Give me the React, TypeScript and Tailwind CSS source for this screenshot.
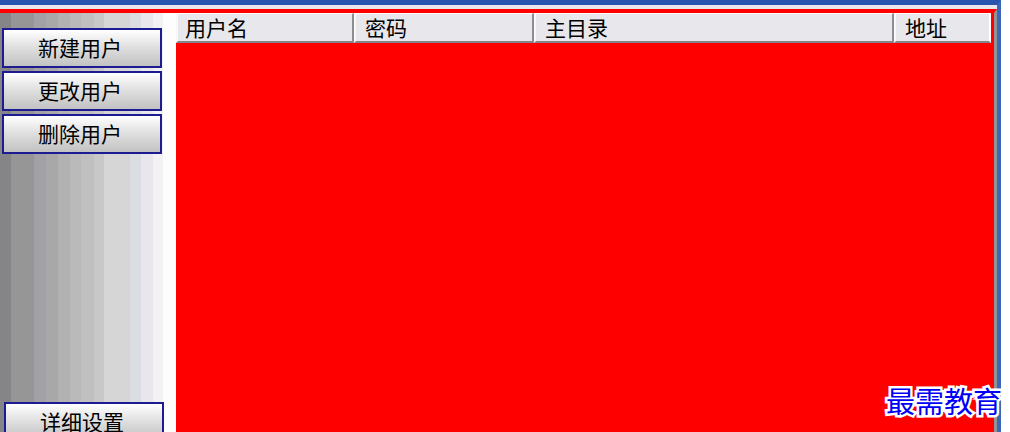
import React, { useState } from 'react';

interface Column {
  title: string;
  width: string;
}

const COLUMNS: Column[] = [
  { title: '用户名', width: 'w-[178px]' },
  { title: '密码', width: 'w-[180px]' },
  { title: '主目录', width: 'w-[360px]' },
  { title: '地址', width: 'w-auto' },
];

const USER_ACTIONS = ['新建用户', '更改用户', '删除用户'];

const SideButton: React.FC<{ label: string; onClick: () => void }> = ({ label, onClick }) => (
  <button
    type="button"
    onClick={onClick}
    className="h-10 w-full shrink-0 border-2 border-[#1c1c90] bg-linear-to-b from-white via-[#dededf] to-[#c2c2c2] pr-1 pb-0.5 text-[21px] leading-[34px] text-black"
  >
    {label}
  </button>
);

const Sidebar: React.FC<{ onAction: (label: string) => void }> = ({ onAction }) => (
  <nav className="flex w-44 shrink-0 flex-col bg-[linear-gradient(to_right,#858587_11px,#969696_11px_34px,#a1a1a6_34px_46px,#a8a8a9_46px_58px,#b2b2b2_58px_70px,#bababa_70px_81px,#c0c0c0_81px_94px,#c8c8c8_94px_104px,#d6d6d6_104px_130px,#dadee3_130px_141px,#e9e7ed_141px_153px,#f2f2f2_153px_163px,#fdfdfd_163px)] pt-[15px] pr-3 pl-0.5">
    <div className="flex flex-col gap-[3px] pr-0.5">
      {USER_ACTIONS.map(label => (
        <SideButton key={label} label={label} onClick={() => onAction(label)} />
      ))}
    </div>
    {/* Settings button runs past the bottom edge of the window */}
    <div className="mt-auto -mb-2.5 pl-0.5">
      <SideButton label="详细设置" onClick={() => onAction('详细设置')} />
    </div>
  </nav>
);

const UserTable: React.FC = () => (
  <div className="min-w-0 flex-1 bg-[#ff0000] pr-[3px]">
    <table className="w-full table-fixed border-separate border-spacing-0">
      <thead>
        <tr>
          {COLUMNS.map(({ title, width }) => (
            <th
              key={title}
              scope="col"
              className={`${width} h-[30px] border-t border-r-2 border-b-2 border-l-2 border-t-white border-r-[#8e8e90] border-b-[#858587] border-l-[#f8f8fa] bg-[#e8e7eb] p-0 pl-[7px] text-left text-[21px] leading-[27px] font-normal text-black not-first:pl-[9px] last:border-r-white`}
            >
              {title}
            </th>
          ))}
        </tr>
      </thead>
      <tbody />
    </table>
  </div>
);

export default function App() {
  const [, setLastAction] = useState('');

  return (
    <div className="relative h-screen overflow-hidden bg-white pr-[9px] font-['Noto_Sans_CJK_SC',sans-serif]">
      <div className="flex h-full flex-col border-t-[5px] border-r-4 border-t-[#2a55af] border-r-[#3c66b8] bg-[#e9e7ed]">
        <div className="mt-1 flex min-h-0 flex-1 flex-col border-t-4 border-r-[3px] border-t-[#ff0000] border-r-[#939393]">
          <main className="flex min-h-0 flex-1">
            <Sidebar onAction={setLastAction} />
            <UserTable />
          </main>
        </div>
      </div>

      <span className="absolute right-2 bottom-2.5 font-[KaiTi,'Noto_Sans_CJK_SC',sans-serif] text-[29px] leading-[44px] text-[#0000f5] [-webkit-text-stroke:5px_white] [paint-order:stroke_fill]">
        最需教育
      </span>
    </div>
  );
}
